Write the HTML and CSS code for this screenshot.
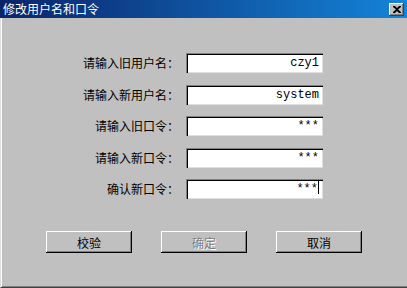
FILE: index.html
```html
<!DOCTYPE html>
<html lang="zh-CN">
<head>
    <meta charset="UTF-8">
    <meta name="viewport" content="width=device-width, initial-scale=1.0">
    <title>修改用户名和口令</title>
    <link rel="stylesheet" href="styles.css">
</head>
<body>
    <div class="window">
        <div class="titlebar">
            <span class="title">修改用户名和口令</span>
            <button class="close" type="button">
                <svg width="8" height="7" viewBox="0 0 8 7">
                    <path d="M0 0h2l2 2 2-2h2v1L5 3.5 8 6v1H6L4 5 2 7H0V6l3-2.5L0 1z" fill="#000"/>
                </svg>
            </button>
        </div>

        <div class="content">
            <form class="fields">
                <label class="label">请输入旧用户名：</label>
                <div class="field">czy1</div>

                <label class="label">请输入新用户名：</label>
                <div class="field">system</div>

                <label class="label">请输入旧口令：</label>
                <div class="field">***</div>

                <label class="label">请输入新口令：</label>
                <div class="field">***</div>

                <label class="label">确认新口令：</label>
                <div class="field">***<span class="caret"></span></div>
            </form>

            <div class="buttons">
                <button class="btn" type="button">校验</button>
                <button class="btn disabled" type="button">确定</button>
                <button class="btn" type="button">取消</button>
            </div>
        </div>
    </div>
</body>
</html>
```
FILE: styles.css
```css
body {
    margin: 0;
    background: #c0c0c0;
    font-family: "Noto Sans CJK SC", "Liberation Sans", sans-serif;
    font-size: 12px;
}
.window {
    width: 407px;
    height: 288px;
    box-sizing: border-box;
    background: #c0c0c0;
    border-left: 1px solid #dfdfdf;
    border-bottom: 1px solid #404040;
    box-shadow: inset 1px 0 0 #fff, inset 0 -1px 0 #808080;
    display: flex;
    flex-direction: column;
}
.titlebar {
    height: 18px;
    margin-left: -1px;
    background: linear-gradient(to right, #0a246a, #1484d8);
    display: flex;
    align-items: center;
    justify-content: space-between;
    padding: 0 3px 0 3px;
}
.title {
    color: #fff;
    font-size: 12px;
    line-height: 18px;
}
.close {
    width: 15px;
    height: 13px;
    padding: 0;
    background: #c0c0c0;
    border: none;
    box-shadow: inset -1px -1px 0 #404040, inset 1px 1px 0 #fff, inset -2px -2px 0 #808080;
    display: flex;
    align-items: center;
    justify-content: center;
}
.content {
    display: flex;
    flex-direction: column;
}
.fields {
    margin: 35px 0 0;
    display: grid;
    grid-template-columns: 178px 137px;
    column-gap: 7px;
    row-gap: 11.5px;
}
.label {
    text-align: right;
    line-height: 20px;
    color: #000;
}
.field {
    height: 20px;
    box-sizing: border-box;
    background: #fff;
    box-shadow: inset 1px 1px 0 #808080, inset 2px 2px 0 #000, inset -1px -1px 0 #dfdfdf;
    font-family: "Liberation Mono", monospace;
    font-size: 12px;
    line-height: 20px;
    text-align: right;
    padding-right: 4px;
    color: #000;
}
.caret {
    display: inline-block;
    width: 1px;
    height: 14px;
    background: #000;
    vertical-align: -2px;
}
.buttons {
    margin-top: 32px;
    padding-left: 45px;
    display: flex;
    gap: 29px;
}
.btn {
    width: 86px;
    height: 22px;
    padding: 0;
    background: #c0c0c0;
    border: none;
    box-shadow: inset -1px -1px 0 #000, inset 1px 1px 0 #fff, inset -2px -2px 0 #808080;
    font-family: "Noto Sans CJK SC", sans-serif;
    font-size: 12px;
    color: #000;
}
.btn.disabled {
    color: #808080;
    text-shadow: 1px 1px 0 #fff;
}
```
